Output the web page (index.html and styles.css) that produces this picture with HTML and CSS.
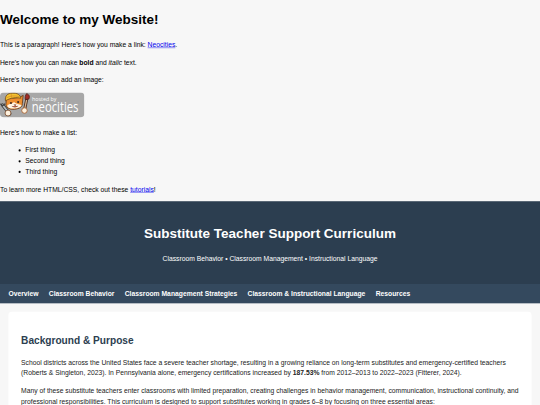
FILE: index.html
```
<!DOCTYPE html>
<html lang="en">
<head>
  <meta charset="UTF-8">
  <meta name="viewport" content="width=device-width, initial-scale=1.0">
  <title>Substitute Teacher Support Curriculum</title>
  <link rel="stylesheet" href="styles.css">
</head>
<body>
  <h1>Welcome to my Website!</h1>

  <p>This is a paragraph! Here's how you make a link: <a href="#">Neocities</a>.</p>

  <p>Here's how you can make <strong>bold</strong> and <em>italic</em> text.</p>

  <p>Here's how you can add an image:</p>
  <p>
    <svg class="hosted" viewBox="0 0 200 60" role="img" aria-label="hosted by neocities">
      <rect x="0" y="0" width="200" height="59" rx="9" fill="#a7a7a7"/>
      <!-- wrench -->
      <path d="M6 30l17 21" stroke="#3f3f3f" stroke-width="8" stroke-linecap="round"/>
      <path d="M6 30l17 21" stroke="#b9c0c4" stroke-width="4" stroke-linecap="round"/>
      <path d="M1 27l5 5 6-5" stroke="#444" stroke-width="3" fill="none"/>
      <!-- brush -->
      <path d="M63 18l-5 24" stroke="#4a2a1c" stroke-width="7" stroke-linecap="round"/>
      <path d="M63 18l-5 24" stroke="#d9b28b" stroke-width="3"/>
      <path d="M63 3c7 2 8 8 5 13l-8 1c-1-5 0-10 3-14z" fill="#a32c25" stroke="#54241c" stroke-width="2"/>
      <!-- cat -->
      <path d="M15 15l-1 14c1 8 10 12 20 11 12-1 20-6 19-14L55 7l-9 5z" fill="#ef8f2f" stroke="#64391d" stroke-width="2"/>
      <path d="M33 23c-4 6-14 4-16 9 3 6 10 7 18 6 8 0 15-3 16-8-6-2-13-2-18-7z" fill="#fff4e4"/>
      <path d="M13 20C11 8 18 2 29 2c12-1 20 4 20 12-10-3-25-1-36 6z" fill="#f5c52f" stroke="#76501d" stroke-width="2"/>
      <path d="M15 13c9-5 19-6 31-3M26 3l2 11" stroke="#d9912a" stroke-width="2" fill="none"/>
      <circle cx="26" cy="25" r="2.5" fill="#40291f"/>
      <circle cx="43" cy="23" r="2.5" fill="#40291f"/>
      <path d="M33 29h5l-2 3zM28 33q8 5 15-1" fill="#b84c32" stroke="#70402c" stroke-width="1"/>
      <circle cx="19" cy="49" r="7" fill="#fff2df" stroke="#7a4c2d" stroke-width="2"/>
      <circle cx="58" cy="43" r="6.5" fill="#fff2df" stroke="#a7602f" stroke-width="2"/>
      <text class="hosted-small" x="76" y="21" textLength="58" lengthAdjust="spacingAndGlyphs">hosted by</text>
      <text class="hosted-name" x="75" y="46" textLength="111" lengthAdjust="spacingAndGlyphs">neocities</text>
    </svg>
  </p>

  <p>Here's how to make a list:</p>

  <ul>
    <li>First thing</li>
    <li>Second thing</li>
    <li>Third thing</li>
  </ul>

  <p>To learn more HTML/CSS, check out these <a href="#">tutorials</a>!</p>

  <header>
    <h1>Substitute Teacher Support Curriculum</h1>
    <p>Classroom Behavior • Classroom Management • Instructional Language</p>
  </header>

  <nav>
    <a href="#overview">Overview</a>
    <a href="#behavior">Classroom Behavior</a>
    <a href="#management">Classroom Management Strategies</a>
    <a href="#language">Classroom &amp; Instructional Language</a>
    <a href="#resources">Resources</a>
  </nav>

  <section id="overview">
    <h2>Background &amp; Purpose</h2>
    <p>School districts across the United States face a severe teacher shortage, resulting in a growing reliance on long-term substitutes and emergency-certified teachers (Roberts &amp; Singleton, 2023). In Pennsylvania alone, emergency certifications increased by <strong>187.53%</strong> from 2012–2013 to 2022–2023 (Fitterer, 2024).</p>
    <p>Many of these substitute teachers enter classrooms with limited preparation, creating challenges in behavior management, communication, instructional continuity, and professional responsibilities. This curriculum is designed to support substitutes working in grades 6–8 by focusing on three essential areas:</p>
  </section>
</body>
</html>
```

FILE: styles.css
```
html {
  height: 100%;
  overflow: hidden;
  background-color: #f7f7f7;
}
/* 1280px wide page scaled down to a 540px window */
body {
  font-family: "Liberation Sans", Arial, sans-serif;
  line-height: 1.6;
  margin: 0;
  width: 1280px;
  height: 960px;
  display: flow-root;
  overflow: hidden;
  transform: scale(0.421875);
  transform-origin: 0 0;
  color: #000;
}
h1 {
  font-size: 2em;
  margin: 0.67em 0;
}
h2 {
  font-size: 1.5em;
  margin: 0.83em 0;
  color: #2c3e50;
}
p {
  margin: 1em 0;
}
a {
  color: #0000ee;
}
ul {
  margin: 16px 0 16px 20px;
  padding-left: 40px;
}
.hosted {
  width: 200px;
  height: 60px;
  margin-bottom: -1px;
}
.hosted-small,
.hosted-name {
  font-family: "Open Sans", sans-serif;
  fill: #fff;
}
.hosted-small {
  font-size: 14px;
}
.hosted-name {
  font-size: 33px;
}
header {
  background-color: #2c3e50;
  color: #fff;
  padding: 30px 20px 31px;
  margin-bottom: -1px;
  text-align: center;
}
nav {
  background-color: #34495e;
  padding: 10px 20px;
}
nav a {
  color: #fff;
  font-weight: bold;
  margin-right: 20px;
  text-decoration: none;
}
section {
  background-color: #fff;
  border-radius: 8px;
  margin: 20px;
  padding: 30px;
  color: #222;
}
```
